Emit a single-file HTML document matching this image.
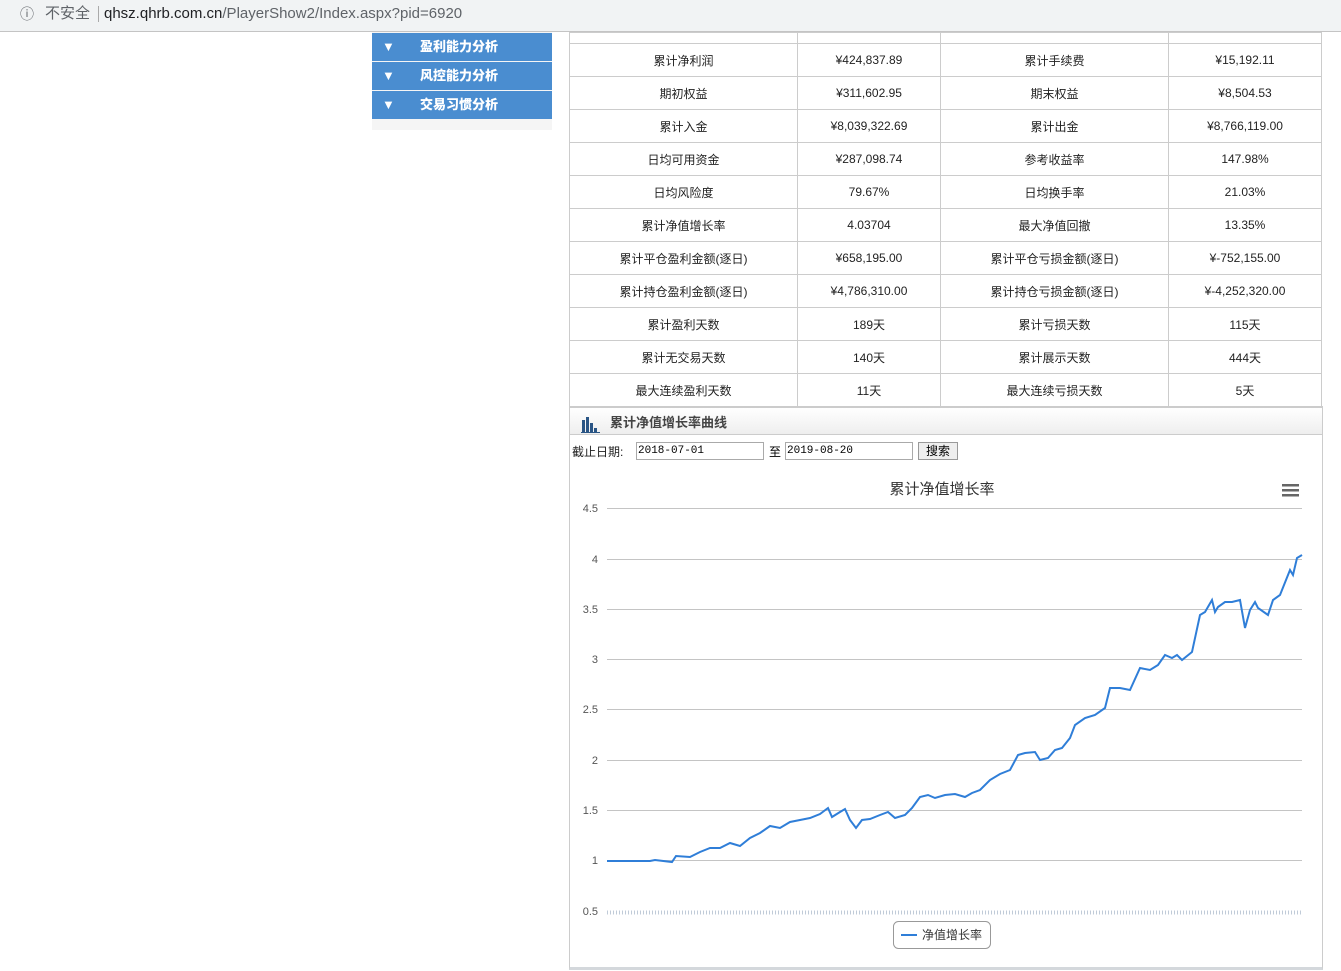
<!DOCTYPE html>
<html><head><meta charset="utf-8"><style>
body{margin:0;width:1341px;height:971px;overflow:hidden;background:#fff;font-family:"Liberation Sans","Noto Sans CJK SC",sans-serif;position:relative}
.bar{position:absolute;left:0;top:0;width:1341px;height:31px;background:#f1f3f4;border-bottom:1px solid #c4c4c4}
.url{position:absolute;left:10px;top:0;height:28px;width:1331px;background:#f1f3f4;border-radius:14px;font-size:15px;color:#5f6368;line-height:28px}
.side{position:absolute;left:372px;top:32px;width:180px;height:98px;background:#f5f5f5}
.side div{position:absolute;left:0;width:180px;height:28px;background:#4a8dd0;color:#fff;font-weight:bold;font-size:13px;line-height:28px}
.side span{position:absolute;left:10px;font-size:13px}
.side b{position:absolute;left:48px}
table{position:absolute;left:569px;top:32px;border-collapse:collapse;font-size:12px;color:#222}
td{border:1px solid #ccc;text-align:center;height:33px;padding:0;box-sizing:border-box}
tr.f td{height:11px}
.panel{position:absolute;left:569px;top:406px;width:752px;height:559px;border:1px solid #ccc;border-top:2px solid #ccc;border-bottom:3px solid #d4d8dc;background:#fff}
.hd{height:26px;background:linear-gradient(#fff,#eee);border-bottom:1px solid #ccc;font-size:13px;font-weight:bold;color:#444;line-height:30px}
input{font-family:"Liberation Mono","Noto Sans CJK SC",monospace}
</style></head><body>
<div class="bar"><div class="url"><span style="position:absolute;left:10px;top:0;font-size:14px">ⓘ</span><span style="position:absolute;left:35px">不安全</span><span style="position:absolute;left:88px;top:6px;width:1px;height:16px;background:#aaa"></span><span style="position:absolute;left:94px;color:#202124">qhsz.qhrb.com.cn<span style="color:#5f6368">/PlayerShow2/Index.aspx?pid=6920</span></span></div></div>
<div class="side">
<div style="top:1px"><span>▼</span><b>盈利能力分析</b></div>
<div style="top:30px"><span>▼</span><b>风控能力分析</b></div>
<div style="top:59px"><span>▼</span><b>交易习惯分析</b></div>
</div>
<table>
<tr class="f"><td style="width:228px"></td><td style="width:143px"></td><td style="width:228px"></td><td style="width:153px"></td></tr>
<tr><td>累计净利润</td><td>¥424,837.89</td><td>累计手续费</td><td>¥15,192.11</td></tr>
<tr><td>期初权益</td><td>¥311,602.95</td><td>期末权益</td><td>¥8,504.53</td></tr>
<tr><td>累计入金</td><td>¥8,039,322.69</td><td>累计出金</td><td>¥8,766,119.00</td></tr>
<tr><td>日均可用资金</td><td>¥287,098.74</td><td>参考收益率</td><td>147.98%</td></tr>
<tr><td>日均风险度</td><td>79.67%</td><td>日均换手率</td><td>21.03%</td></tr>
<tr><td>累计净值增长率</td><td>4.03704</td><td>最大净值回撤</td><td>13.35%</td></tr>
<tr><td>累计平仓盈利金额(逐日)</td><td>¥658,195.00</td><td>累计平仓亏损金额(逐日)</td><td>¥-752,155.00</td></tr>
<tr><td>累计持仓盈利金额(逐日)</td><td>¥4,786,310.00</td><td>累计持仓亏损金额(逐日)</td><td>¥-4,252,320.00</td></tr>
<tr><td>累计盈利天数</td><td>189天</td><td>累计亏损天数</td><td>115天</td></tr>
<tr><td>累计无交易天数</td><td>140天</td><td>累计展示天数</td><td>444天</td></tr>
<tr><td>最大连续盈利天数</td><td>11天</td><td>最大连续亏损天数</td><td>5天</td></tr>
</table>
<div class="panel">
<div class="hd"><svg width="20" height="18" style="position:absolute;left:11px;top:8px"><rect x="1" y="4" width="3" height="13" fill="#2a5585"/><rect x="5" y="1" width="3" height="16" fill="#2a5585"/><rect x="9" y="7" width="3" height="10" fill="#2a5585"/><rect x="13" y="12" width="3" height="5" fill="#2a5585"/><rect x="0" y="16" width="19" height="1" fill="#2a5585"/></svg><span style="position:absolute;left:40px">累计净值增长率曲线</span></div>
<div style="position:absolute;left:2px;top:35px;font-size:12px;color:#222">截止日期:</div>
<input style="position:absolute;left:66px;top:34px;width:124px;height:14px;font-size:11px;border:1px solid #aaa;padding:1px" value="2018-07-01">
<div style="position:absolute;left:199px;top:35px;font-size:12px">至</div>
<input style="position:absolute;left:215px;top:34px;width:124px;height:14px;font-size:11px;border:1px solid #aaa;padding:1px" value="2019-08-20">
<div style="position:absolute;left:348px;top:34px;width:38px;height:16px;border:1px solid #999;background:#eee;font-size:12px;text-align:center;line-height:16px">搜索</div>
</div>
<svg width="1341" height="971" style="position:absolute;left:0;top:0" font-family="Liberation Sans,Noto Sans CJK SC,sans-serif">
<text x="942" y="494" font-size="15" fill="#333" text-anchor="middle">累计净值增长率</text>
<g fill="#666"><rect x="1282" y="484" width="17" height="2.5"/><rect x="1282" y="489" width="17" height="2.5"/><rect x="1282" y="494" width="17" height="2.5"/></g>
<g stroke="#c4c4c4" stroke-width="1">
<line x1="607" x2="1302" y1="508.5" y2="508.5"/><line x1="607" x2="1302" y1="559.5" y2="559.5"/><line x1="607" x2="1302" y1="609.5" y2="609.5"/><line x1="607" x2="1302" y1="659.5" y2="659.5"/><line x1="607" x2="1302" y1="709.5" y2="709.5"/><line x1="607" x2="1302" y1="760.5" y2="760.5"/><line x1="607" x2="1302" y1="810.5" y2="810.5"/><line x1="607" x2="1302" y1="860.5" y2="860.5"/></g>
<line x1="607" x2="1302" y1="912.5" y2="912.5" stroke="#c0cbd8" stroke-width="4" stroke-dasharray="1 2"/>
<g font-size="11" fill="#555" text-anchor="end"><text x="598" y="512">4.5</text><text x="598" y="563">4</text><text x="598" y="613">3.5</text><text x="598" y="663">3</text><text x="598" y="713">2.5</text><text x="598" y="764">2</text><text x="598" y="814">1.5</text><text x="598" y="864">1</text><text x="598" y="915">0.5</text></g>
<polyline fill="none" stroke="#2f7ed8" stroke-width="2" points="607,861 650,861 655,860 672,862 676,856 690,857 700,852 710,848 720,848 730,843 740,846 750,838 760,833 770,826 780,828 790,822 800,820 810,818 820,814 828,808 832,817 840,812 845,809 850,820 856,828 862,820 870,819 880,815 888,812 895,818 905,815 912,808 920,797 928,795 935,798 945,795 955,794 965,797 972,793 980,790 990,780 1000,774 1010,770 1018,755 1025,753 1035,752 1040,760 1048,758 1055,750 1062,748 1070,738 1075,725 1085,718 1095,715 1105,708 1110,688 1120,688 1130,690 1140,668 1150,670 1158,665 1165,655 1172,658 1177,655 1182,660 1192,652 1200,615 1205,612 1212,600 1215,612 1218,607 1225,602 1232,602 1240,600 1245,628 1250,610 1255,602 1258,608 1268,615 1273,600 1280,595 1284,585 1290,570 1293,575 1297,558 1302,555"/>
<rect x="893.5" y="921.5" width="97" height="27" rx="5" fill="#fff" stroke="#999"/>
<line x1="901" x2="917" y1="935" y2="935" stroke="#2f7ed8" stroke-width="2"/>
<text x="922" y="939" font-size="12" fill="#333">净值增长率</text>
</svg>
</body></html>
